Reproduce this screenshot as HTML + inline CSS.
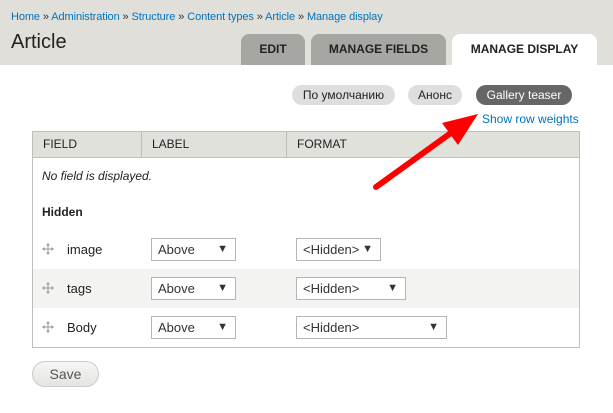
<!DOCTYPE html>
<html><head><meta charset="utf-8"><style>
*{box-sizing:border-box;margin:0;padding:0}
body{width:613px;height:413px;background:#fff;font-family:"Liberation Sans",sans-serif;position:relative;overflow:hidden;color:#222}
.abs{position:absolute}
.band{left:0;top:0;width:613px;height:65px;background:#e0dfd9}
.bc{left:11px;top:11px;font-size:11px;color:#0074bd;white-space:nowrap;letter-spacing:-0.1px}
.bc span{color:#333}
h1{position:absolute;left:11px;top:31px;font-size:20px;font-weight:normal;color:#222}
.tab{top:34px;height:31px;background:#a6a6a2;border-radius:8px 8px 0 0;font-size:12px;font-weight:bold;text-align:center;line-height:31px;color:#222}
.pill{top:85px;height:20px;border-radius:10px;background:#dedede;font-size:12px;line-height:20px;text-align:center;color:#222}
.link{left:482px;top:112px;font-size:12px;color:#0074bd}
.tbl{left:32px;top:131px;width:548px;height:217px;border:1px solid #bfbfba}
.th{top:131px;height:27px;background:#e1e1dc;border:1px solid #bfbfba;font-size:12px;line-height:25px;padding-left:10px}
.t{font-size:12px}
.sel{height:23px;border:1px solid #b5b5b5;background:#fff;font-size:13px;line-height:21px;padding-left:6px;color:#333}
.sel b{position:absolute;right:7px;top:0;font-size:11px}
.mv{width:12px;height:12px}
</style></head><body>
<div class="abs band"></div>
<div class="abs bc">Home <span>»</span> Administration <span>»</span> Structure <span>»</span> Content types <span>»</span> Article <span>»</span> Manage display</div>
<h1>Article</h1>
<div class="abs tab" style="left:241px;width:64px">EDIT</div>
<div class="abs tab" style="left:311px;width:135px">MANAGE FIELDS</div>
<div class="abs tab" style="left:452px;width:145px;background:#fff">MANAGE DISPLAY</div>
<div class="abs pill" style="left:292px;width:103px">По умолчанию</div>
<div class="abs pill" style="left:408px;width:54px">Анонс</div>
<div class="abs pill" style="left:476px;width:96px;background:#666;color:#fff">Gallery teaser</div>
<div class="abs link">Show row weights</div>
<div class="abs tbl"></div>
<div class="abs" style="left:33px;top:269px;width:546px;height:39px;background:#f3f3f1"></div>
<div class="abs th" style="left:32px;width:110px">FIELD</div>
<div class="abs th" style="left:141px;width:146px">LABEL</div>
<div class="abs th" style="left:286px;width:294px">FORMAT</div>
<div class="abs t" style="left:42px;top:169px;font-style:italic">No field is displayed.</div>
<div class="abs t" style="left:42px;top:205px;font-weight:bold">Hidden</div>
<svg class="abs" style="left:0;top:0" width="613" height="413">
<defs><g id="mv" fill="#999" stroke="#999" stroke-width="1">
<line x1="6" y1="1" x2="6" y2="11"/><line x1="1" y1="6" x2="11" y2="6"/>
<polygon points="6,0 4,2.5 8,2.5" stroke="none"/><polygon points="6,12 4,9.5 8,9.5" stroke="none"/>
<polygon points="0,6 2.5,4 2.5,8" stroke="none"/><polygon points="12,6 9.5,4 9.5,8" stroke="none"/></g></defs>
<use href="#mv" x="42" y="243"/><use href="#mv" x="42" y="282"/><use href="#mv" x="42" y="321"/>
</svg>
<div class="abs t" style="left:67px;top:242px;font-size:13px">image</div>
<div class="abs t" style="left:67px;top:281px;font-size:13px">tags</div>
<div class="abs t" style="left:67px;top:320px;font-size:13px">Body</div>
<div class="abs sel" style="left:151px;top:238px;width:85px">Above<b>▼</b></div>
<div class="abs sel" style="left:151px;top:277px;width:85px">Above<b>▼</b></div>
<div class="abs sel" style="left:151px;top:316px;width:85px">Above<b>▼</b></div>
<div class="abs sel" style="left:296px;top:238px;width:85px">&lt;Hidden&gt;<b>▼</b></div>
<div class="abs sel" style="left:296px;top:277px;width:110px">&lt;Hidden&gt;<b>▼</b></div>
<div class="abs sel" style="left:296px;top:316px;width:151px">&lt;Hidden&gt;<b>▼</b></div>
<div class="abs" style="left:32px;top:361px;width:67px;height:26px;border:1px solid #ccc;border-radius:13px;background:linear-gradient(#f6f6f4,#e4e4e0);font-size:14px;line-height:24px;text-align:center;color:#555">Save</div>
<svg class="abs" style="left:0;top:0" width="613" height="413">
<line x1="376" y1="187" x2="455" y2="130" stroke="#f00" stroke-width="6" stroke-linecap="round"/>
<polygon points="478,114 442,123 458,145" fill="#f00"/>
</svg>
</body></html>
